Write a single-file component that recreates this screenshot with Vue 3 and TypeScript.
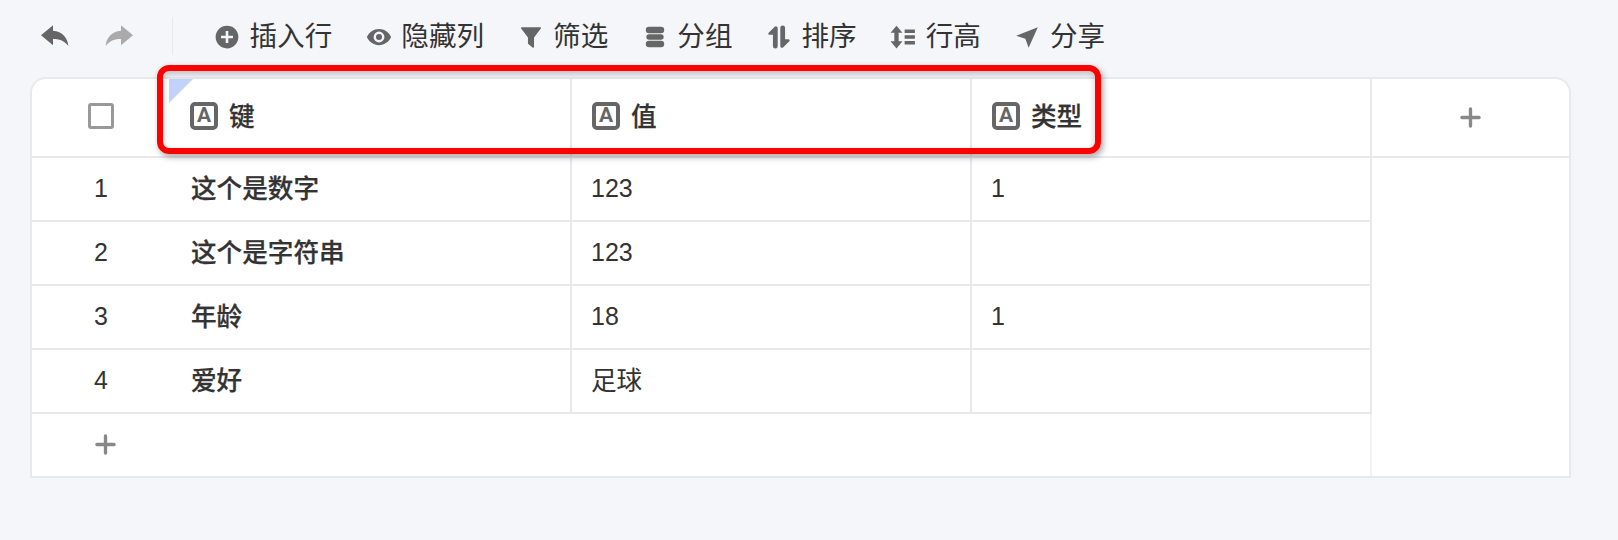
<template>
  <div class="page">
    <div class="toolbar">
      <div class="history">
        <svg class="icon undo" viewBox="0 0 24 24"><path :d="replyPath" /></svg>
        <svg class="icon redo" viewBox="0 0 24 24"><path :d="replyPath" transform="matrix(-1 0 0 1 24 0)" /></svg>
      </div>
      <div class="tools">
        <button v-for="t in tools" :key="t.label" class="tool">
          <svg class="icon" viewBox="0 0 24 24"><path :d="t.icon" fill-rule="evenodd" /></svg>
          <span>{{ t.label }}</span>
        </button>
      </div>
    </div>

    <div class="table">
      <div class="main">
        <div class="row head">
          <div class="index"><span class="checkbox" /></div>
          <div v-for="c in columns" :key="c" class="cell">
            <span class="type-icon">A</span>
            <span class="title">{{ c }}</span>
          </div>
        </div>
        <div v-for="(r, i) in rows" :key="r.key" class="row">
          <div class="index">{{ i + 1 }}</div>
          <div class="cell key cjk">{{ r.key }}</div>
          <div class="cell" :class="{ cjk: isCjk(r.value) }">{{ r.value }}</div>
          <div class="cell">{{ r.type }}</div>
        </div>
        <div class="add-row">
          <svg class="plus" viewBox="0 0 22 22"><path d="M11 2v18M2 11h18" /></svg>
        </div>
      </div>
      <div class="side">
        <div class="add-col">
          <svg class="plus" viewBox="0 0 22 22"><path d="M11 2v18M2 11h18" /></svg>
        </div>
      </div>
      <span class="corner" />
      <div class="highlight" />
    </div>
  </div>
</template>

<script setup lang="ts">
const replyPath = 'M10.500 4 1.500 11.500l9 7.500v-4.700c4.500 0 8 .9 11.500 5.200-.3-6-4.500-11-11.500-11.500z'

const tools = [
  { label: '插入行', icon: 'M12 1.500a10.500 10.500 0 1 0 0 21 10.500 10.500 0 0 0 0-21zm1.200 5v4.300h4.300v2.400h-4.300v4.300h-2.400v-4.300H6.500v-2.400h4.300V6.500z' },
  { label: '隐藏列', icon: 'M12 4.500C7 4.500 2.700 7.600 .8 12c1.900 4.400 6.200 7.500 11.200 7.500s9.300-3.100 11.200-7.500C21.300 7.600 17 4.500 12 4.500zM12 7a5 5 0 1 1 0 10 5 5 0 0 1 0-10zm0 2.200a2.800 2.800 0 1 0 0 5.600 2.800 2.800 0 0 0 0-5.600z' },
  { label: '筛选', icon: 'M3.500 3h17c.8 0 1 .7.6 1.200L14.800 12.500V21c0 .8-.8 1.200-1.400.8l-3.600-3c-.4-.3-.6-.6-.6-1v-5.300L2.900 4.200C2.500 3.700 2.700 3 3.500 3z' },
  { label: '分组', icon: 'M6.500 2.500h11a3 3 0 0 1 0 6h-11a3 3 0 0 1 0-6zm0 7h11a2.500 2.500 0 0 1 0 5h-11a2.500 2.500 0 0 1 0-5zm0 6h11a3 3 0 0 1 0 6h-11a3 3 0 0 1 0-6z' },
  { label: '排序', icon: 'M9 2c.8 0 1.800.7 1.800 1.500v17a2.200 2.200 0 0 1-4.400 0V10H3.500C2.200 10 1.700 8.800 2.500 8L8 2.500c.3-.3.600-.5 1-.5zm6 20c-.8 0-1.800-.7-1.800-1.500v-17a2.200 2.200 0 0 1 4.400 0V14h2.900c1.300 0 1.800 1.200 1 2L16 21.500c-.3.300-.6.500-1 .5z' },
  { label: '行高', icon: 'M6 1.500l5.500 6.500H8v8h3.500L6 22.500.5 16H4V8H.5zM13.500 5h9.500v3.200h-9.500zm0 5.400h9.500v3.200h-9.500zm0 5.400h9.500V19h-9.500z' },
  { label: '分享', icon: 'M22 3 2 10.800l8.500 2.700L13.500 22z' },
]

const columns = ['键', '值', '类型']

const rows = [
  { key: '这个是数字', value: '123', type: '1' },
  { key: '这个是字符串', value: '123', type: '' },
  { key: '年龄', value: '18', type: '1' },
  { key: '爱好', value: '足球', type: '' },
]

const isCjk = (s: string) => /[^\x00-\x7f]/.test(s)
</script>

<style>
html,
body {
  margin: 0;
  background: #f5f6fa;
}
</style>

<style scoped>
.page {
  width: 1618px;
  height: 540px;
  box-sizing: border-box;
  padding: 17px 47px 0 30px;
  background: #f5f6fa;
  font-family: "Liberation Sans", "Noto Sans CJK SC", sans-serif;
  color: #333;
}

.toolbar {
  display: flex;
  align-items: center;
  height: 38px;
  margin-bottom: 22px;
}

.history {
  display: flex;
  gap: 32px;
  align-items: center;
  width: 143px;
  height: 38px;
  padding-left: 9px;
  box-sizing: border-box;
  border-right: 1px solid #e8e9ee;
}

.tools {
  display: flex;
  gap: 33.500px;
  padding-left: 41px;
}

.tool {
  display: flex;
  align-items: center;
  gap: 9.500px;
  padding: 2px 0 0;
  border: none;
  background: none;
  font: inherit;
  font-size: 27.600px;
  line-height: 38px;
  color: #333;
}

.icon {
  width: 26px;
  height: 26px;
  flex-shrink: 0;
  fill: #666;
}

.undo,
.redo {
  width: 32px;
  height: 32px;
}

.redo {
  fill: #aaa;
}

.table {
  position: relative;
  display: flex;
  box-sizing: border-box;
  width: 1541px;
  height: 401px;
  background: #fff;
  border: 2px solid #e8e9ee;
  border-radius: 16px 16px 0 0;
  font-size: 25px;
}

.main {
  width: 1338px;
  border-right: 2px solid #f2f2f5;
}

.side {
  flex: 1;
}

.row {
  display: grid;
  grid-template-columns: 138px 402px 400px 1fr;
  height: 62px;
  margin-right: -2px;
  border-bottom: 2px solid #e8e9ee;
}

.row.head {
  height: 77px;
}

.index {
  display: flex;
  align-items: center;
  justify-content: center;
  padding-bottom: 2px;
}

.head .index {
  padding-bottom: 4px;
}

.cell {
  display: flex;
  align-items: center;
  gap: 11px;
  padding: 0 0 2px 19px;
  border-right: 2px solid #e8e9ee;
}

.cell.cjk {
  padding-bottom: 5px;
  font-size: 25.600px;
}

.cell.key {
  font-weight: 500;
  -webkit-text-stroke: 0.25px #333;
  padding-left: 21px;
}

.head .cell {
  padding: 0 0 4px 20px;
}

.head .cell:first-of-type {
  padding-left: 22px;
  gap: 12px;
}

.title {
  position: relative;
  top: -1px;
  font-size: 25.600px;
  font-weight: 500;
  -webkit-text-stroke: 0.25px #333;
}

.checkbox {
  width: 26px;
  height: 26px;
  box-sizing: border-box;
  border: 3px solid #999;
  border-radius: 3px;
}

.type-icon {
  display: flex;
  align-items: center;
  justify-content: center;
  width: 28px;
  height: 28px;
  box-sizing: border-box;
  border: 4px solid #666;
  border-radius: 5px;
  font-family: Roboto, sans-serif;
  font-size: 21px;
  font-weight: 700;
  line-height: 1;
  color: #666;
}

.add-row {
  display: flex;
  align-items: center;
  height: 60px;
  padding-left: 63px;
}

.add-col {
  display: flex;
  align-items: center;
  justify-content: center;
  box-sizing: content-box;
  height: 76px;
  padding-bottom: 1px;
  border-bottom: 2px solid #e8e9ee;
}

.plus {
  width: 21px;
  height: 21px;
  fill: none;
  stroke: #888;
  stroke-width: 3.500;
  stroke-linecap: round;
}

.corner {
  position: absolute;
  left: 137px;
  top: 0;
  width: 24px;
  height: 24px;
  background: #c2d2fb;
  clip-path: polygon(0 0, 100% 0, 0 100%);
}

.highlight {
  position: absolute;
  left: 125px;
  top: -14px;
  width: 944px;
  height: 89px;
  box-sizing: border-box;
  border: 6px solid #f00;
  border-radius: 12px;
  box-shadow: 2px 3px 6px rgba(60, 60, 60, 0.45), inset 0 3px 6px rgba(60, 60, 60, 0.3);
}
</style>
